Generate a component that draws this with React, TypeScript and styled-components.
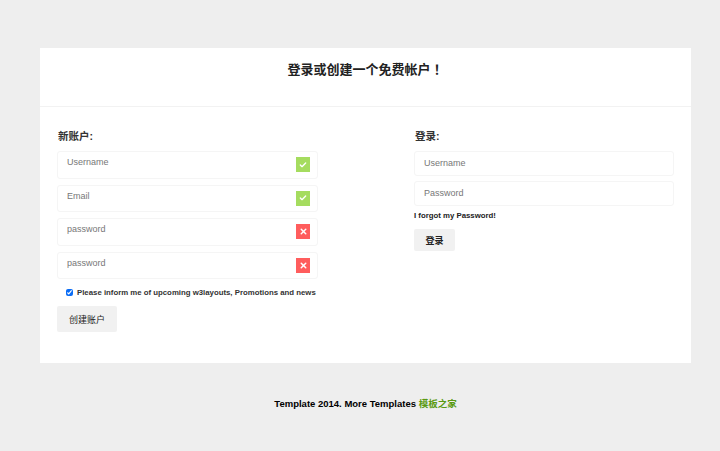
import { Check, X } from "lucide-react";
import styled, { createGlobalStyle } from "styled-components";

const GlobalStyle = createGlobalStyle`
  html, body {
    margin: 0;
    padding: 0;
    background: #eeeeee;
  }
  body {
    font-family: "Liberation Sans", "Noto Sans CJK SC", sans-serif;
  }
`;

const Page = styled.div`
  width: 720px;
  height: 451px;
  padding-top: 48px;
  box-sizing: border-box;
  overflow: hidden;
`;

const Card = styled.div`
  width: 651px;
  height: 315px;
  margin-left: 40px;
  background: #fff;
`;

const CardHeader = styled.div`
  height: 59px;
  box-sizing: border-box;
  border-bottom: 1px solid #f2f2f2;
  padding-top: 11px;
  text-align: center;

  h1 {
    margin: 0;
    font-size: 13px;
    line-height: 20px;
    font-weight: 700;
    color: #222;
    text-spacing-trim: space-all;
  }

  /* the TC face centres the full-width mark in its cell, as the design does */
  h1 span {
    font-family: "Noto Sans CJK TC", sans-serif;
  }
`;

const Columns = styled.div`
  display: flex;
  justify-content: space-between;
  padding: 22px 17px 0 17px;
`;

const Column = styled.div<{ $width: number }>`
  width: ${(p) => p.$width}px;
`;

const Heading = styled.h2`
  margin: 0 0 7px 1px;
  font-size: 10.5px;
  line-height: 15px;
  font-weight: 700;
  color: #333;
`;

const Field = styled.div<{ $height: number; $gap: number }>`
  display: flex;
  justify-content: space-between;
  height: ${(p) => p.$height}px;
  margin-bottom: ${(p) => p.$gap}px;
  box-sizing: border-box;
  border: 1px solid #f5f5f5;
  border-radius: 3px;
  background: #fff;
`;

const Input = styled.input<{ $top: number }>`
  flex: 1;
  min-width: 0;
  height: 14px;
  margin: ${(p) => p.$top}px 0 0 9px;
  padding: 0;
  border: none;
  outline: none;
  font-family: inherit;
  font-size: 9px;
  color: #777;

  &::placeholder {
    color: #777;
    opacity: 1;
  }
`;

const Status = styled.span<{ $ok: boolean }>`
  display: flex;
  align-items: center;
  justify-content: center;
  width: 14px;
  height: 15px;
  margin: 5px 7px 0 0;
  background: ${(p) => (p.$ok ? "#a5dc5f" : "#ff5d5d")};
  color: #fff;
`;

const Consent = styled.label`
  display: flex;
  align-items: center;
  height: 14px;
  margin: 0 0 7px 9px;
  font-size: 7.8px;
  font-weight: 700;
  color: #333;
  white-space: nowrap;

  input {
    width: 7px;
    height: 7px;
    margin: 0 4px 0 0;
    accent-color: #0a6cf5;
  }
`;

const Forgot = styled.a`
  display: block;
  margin: -1px 0 7px 0;
  font-size: 7.8px;
  line-height: 12px;
  font-weight: 700;
  color: #222;
`;

const Button = styled.button<{ $width: number; $height: number; $bold?: boolean }>`
  display: block;
  width: ${(p) => p.$width}px;
  height: ${(p) => p.$height}px;
  padding: 0;
  border: none;
  border-radius: 2px;
  background: #f1f1f1;
  font-family: inherit;
  font-size: 9px;
  font-weight: ${(p) => (p.$bold ? 700 : 400)};
  color: #222;
`;

const Footer = styled.p`
  margin: 34px 0 0;
  padding-left: 11px;
  font-size: 9.5px;
  line-height: 14px;
  font-weight: 700;
  color: #000;
  text-align: center;

  a {
    color: #5a9a12;
  }
`;

const signupFields = [
  { placeholder: "Username", ok: true },
  { placeholder: "Email", ok: true },
  { placeholder: "password", ok: false },
  { placeholder: "password", ok: false },
];

export default function App() {
  return (
    <Page>
      <GlobalStyle />
      <Card>
        <CardHeader>
          <h1>登录或创建一个免费帐户<span>！</span></h1>
        </CardHeader>
        <Columns>
          <Column $width={261}>
            <Heading>新账户:</Heading>
            {signupFields.map((f, i) => (
              <Field key={i} $height={27.5} $gap={6}>
                <Input $top={3} placeholder={f.placeholder} />
                <Status $ok={f.ok}>
                  {f.ok ? <Check size={8} strokeWidth={4} /> : <X size={9} strokeWidth={4} />}
                </Status>
              </Field>
            ))}
            <Consent>
              <input type="checkbox" defaultChecked readOnly />
              Please inform me of upcoming w3layouts, Promotions and news
            </Consent>
            <Button $width={60} $height={26}>创建账户</Button>
          </Column>
          <Column $width={260}>
            <Heading>登录:</Heading>
            <Field $height={25} $gap={5}>
              <Input $top={4} placeholder="Username" />
            </Field>
            <Field $height={25} $gap={5}>
              <Input $top={4} placeholder="Password" />
            </Field>
            <Forgot>I forgot my Password!</Forgot>
            <Button $width={41} $height={22} $bold>登录</Button>
          </Column>
        </Columns>
      </Card>
      <Footer>
        Template 2014. More Templates <a>模板之家</a>
      </Footer>
    </Page>
  );
}
